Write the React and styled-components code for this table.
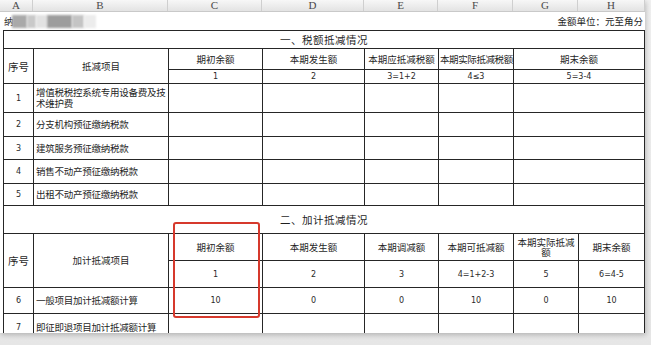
import React from 'react';
import styled, { createGlobalStyle } from 'styled-components';

const GlobalStyle = createGlobalStyle`
  html, body {
    margin: 0;
    padding: 0;
    background: #ededed;
  }
  body {
    font-family: "Noto Sans CJK SC", "Noto Sans", sans-serif;
    color: #2a2a2a;
  }
`;

const letters = [
  ['A', 33], ['B', 135], ['C', 94], ['D', 102],
  ['E', 74], ['F', 75], ['G', 65], ['H', 67],
];

const colWidths = [30, 135, 94, 102, 74, 75, 65, 66];

const mosaic = [
  [8, 15, '#a9a9a9'], [23, 9, '#c9c9c9'], [32, 11, '#e2e2e2'],
  [43, 25, '#9d9d9d'], [68, 12, '#c4c4c4'], [80, 12, '#ececec'],
];

const firstPart = [
  ['1', '增值税税控系统专用设备费及技术维护费'],
  ['2', '分支机构预征缴纳税款'],
  ['3', '建筑服务预征缴纳税款'],
  ['4', '销售不动产预征缴纳税款'],
  ['5', '出租不动产预征缴纳税款'],
];
const firstHeights = [29, 24, 23, 24, 22];

export default function App() {
  return (
    <>
      <GlobalStyle />
      <Page>
        <Sheet>
          <ColumnBar>
            {letters.map(([l, w]) => (
              <ColumnLetter key={l} $w={w}>{l}</ColumnLetter>
            ))}
          </ColumnBar>

          <InfoRow>
            <Owner>
              纳
              {mosaic.map(([x, w, c]) => (
                <Blur key={x} style={{ left: x, width: w, background: c }} />
              ))}
            </Owner>
            <Unit>金额单位：元至角分</Unit>
          </InfoRow>

          <Grid>
            <colgroup>
              {colWidths.map((w, i) => <col key={i} style={{ width: w }} />)}
            </colgroup>
            <tbody>
              <Row $h={18}>
                <Title colSpan={8}>一、税额抵减情况</Title>
              </Row>
              <Row $h={21}>
                <Cell rowSpan={2} $big>序号</Cell>
                <Cell rowSpan={2}>抵减项目</Cell>
                <Cell>期初余额</Cell>
                <Cell>本期发生额</Cell>
                <Cell>本期应抵减税额</Cell>
                <Cell $tight>本期实际抵减税额</Cell>
                <Cell colSpan={2}>期末余额</Cell>
              </Row>
              <Row $h={14}>
                <Num>1</Num>
                <Num>2</Num>
                <Num>3=1+2</Num>
                <Num>4≤3</Num>
                <Num colSpan={2}>5=3-4</Num>
              </Row>
              {firstPart.map(([n, name], i) => (
                <Row key={n} $h={firstHeights[i]}>
                  <Num>{n}</Num>
                  <Cell $left>{name}</Cell>
                  <Cell />
                  <Cell />
                  <Cell />
                  <Cell />
                  <Cell colSpan={2} />
                </Row>
              ))}

              <Row $h={28}>
                <Title colSpan={8}>二、加计抵减情况</Title>
              </Row>
              <Row $h={27}>
                <Cell rowSpan={2} $big>序号</Cell>
                <Cell rowSpan={2}>加计抵减项目</Cell>
                <Cell>期初余额</Cell>
                <Cell>本期发生额</Cell>
                <Cell>本期调减额</Cell>
                <Cell>本期可抵减额</Cell>
                <Cell $wrap>本期实际抵减额</Cell>
                <Cell>期末余额</Cell>
              </Row>
              <Row $h={27}>
                <Num>1</Num>
                <Num>2</Num>
                <Num>3</Num>
                <Num>4=1+2-3</Num>
                <Num>5</Num>
                <Num>6=4-5</Num>
              </Row>
              <Row $h={26}>
                <Num>6</Num>
                <Cell $left>一般项目加计抵减额计算</Cell>
                <Num>10</Num>
                <Num>0</Num>
                <Num>0</Num>
                <Num>10</Num>
                <Num>0</Num>
                <Num>10</Num>
              </Row>
              <Row $h={28}>
                <Num>7</Num>
                <Cell $left>即征即退项目加计抵减额计算</Cell>
                <Cell />
                <Cell />
                <Cell />
                <Cell />
                <Cell />
                <Cell />
              </Row>
            </tbody>
          </Grid>

          <Highlight />
        </Sheet>
      </Page>
    </>
  );
}

const Page = styled.div`
  width: 651px;
  height: 345px;
  overflow: hidden;
  background: linear-gradient(#f0f0f0, #e6e6e6);
`;

const Sheet = styled.div`
  position: relative;
  width: 645px;
  height: 333px;
  overflow: hidden;
  background: #fff;
  box-shadow: 1px 2px 5px rgba(0, 0, 0, 0.22);
`;

const ColumnBar = styled.div`
  display: flex;
  height: 12px;
  background: linear-gradient(#f7f7f7, #e3e3e3);
  border-bottom: 1px solid #c9c9c9;
  box-sizing: border-box;
`;

const ColumnLetter = styled.div`
  flex: 0 0 ${p => p.$w}px;
  box-sizing: border-box;
  border-right: 1px solid #cfcfcf;
  text-align: center;
  font-family: "Liberation Serif", serif;
  font-size: 11px;
  line-height: 10px;
  color: #4a4a4a;
  overflow: hidden;
`;

const InfoRow = styled.div`
  display: flex;
  justify-content: space-between;
  align-items: center;
  height: 18px;
  padding: 0 2px 0 4px;
  font-size: 9.5px;
`;

const Owner = styled.div`
  position: relative;
  width: 95px;
  height: 14px;
  line-height: 14px;
`;

const Blur = styled.span`
  position: absolute;
  top: 1px;
  height: 13px;
  filter: blur(1px);
`;

const Unit = styled.div`
  color: #1e1e1e;
`;

const Grid = styled.table`
  margin-left: 3px;
  border-collapse: collapse;
  table-layout: fixed;
  width: 641px;
  font-size: 9.5px;
  color: #1f1f1f;
`;

const Row = styled.tr`
  height: ${p => p.$h}px;
`;

const Cell = styled.td`
  border: 1px solid #262626;
  padding: ${p => (p.$left ? '0 0 0 2px' : '0 1px')};
  text-align: ${p => (p.$left ? 'left' : 'center')};
  vertical-align: middle;
  font-size: ${p => (p.$big ? '10.5px' : '9.5px')};
  line-height: 11px;
  white-space: ${p => (p.$tight ? 'nowrap' : 'normal')};
  letter-spacing: ${p => (p.$tight ? '-0.4px' : p.$left ? '-0.25px' : '0')};
  overflow: hidden;
  word-break: break-all;
  ${p => p.$wrap && 'padding: 0 2px; line-height: 10px;'}
`;

const Num = styled(Cell)`
  font-family: "DejaVu Sans", "Noto Sans", sans-serif;
  font-size: 8px;
  letter-spacing: 0;
  color: #2a2a2a;
`;

const Title = styled.td`
  border: 1px solid #262626;
  text-align: center;
  vertical-align: middle;
  font-size: 10.5px;
  letter-spacing: 0.5px;
`;

const Highlight = styled.div`
  position: absolute;
  left: 173px;
  top: 222px;
  width: 83px;
  height: 92px;
  border: 2px solid #d6392c;
  border-radius: 3px;
  pointer-events: none;
`;
